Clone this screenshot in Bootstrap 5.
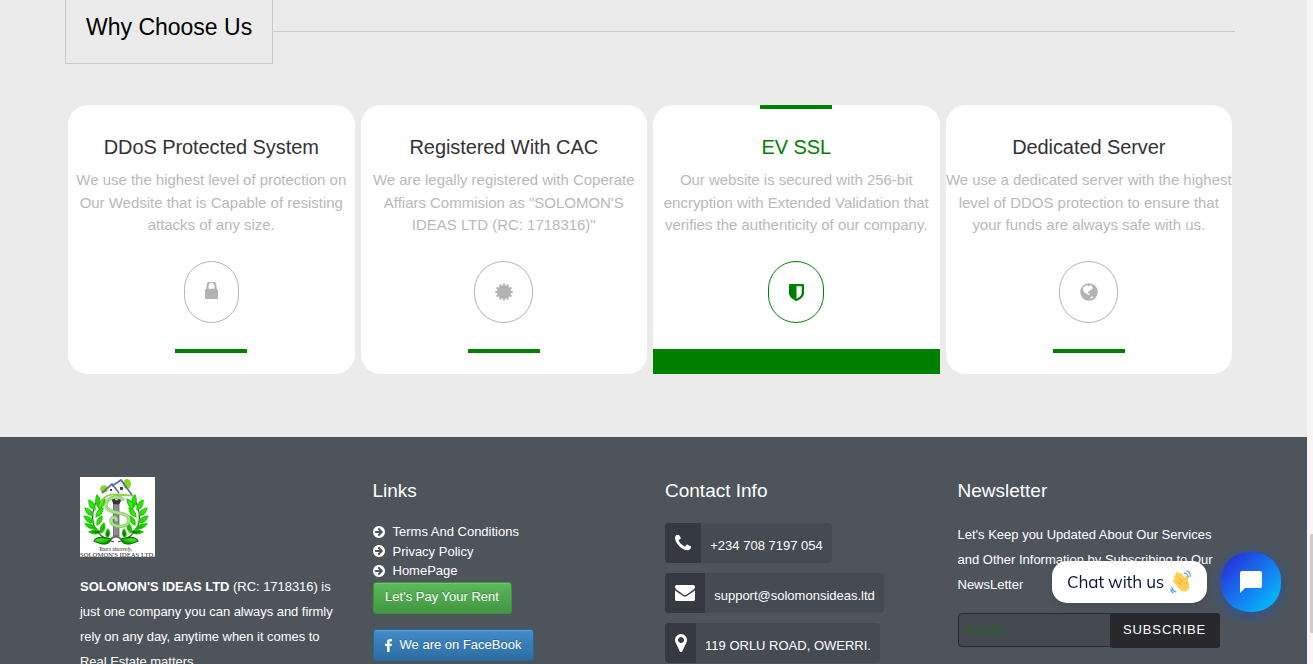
<!DOCTYPE html>
<html lang="en">
<head>
<meta charset="utf-8">
<meta name="viewport" content="width=device-width, initial-scale=1">
<title>Solomon's Ideas LTD</title>
<link href="https://cdn.jsdelivr.net/npm/bootstrap@5.3.0/dist/css/bootstrap.min.css" rel="stylesheet">
<style>
html,body{height:664px;overflow:hidden}
body{font-family:"Liberation Sans",Arial,sans-serif;background:#ebebeb;font-size:13px;line-height:20px;color:#fff}
.page{width:1307px;height:664px;overflow:hidden}
.track{width:6px;height:664px;background:#f6f6f6;padding-top:534px}
.thumb{width:3px;height:99px;margin-left:3px;background:#cbcbcb;border-radius:2px 0 0 2px}
.wrap{width:1170px;margin-left:65px}
.heading{height:105px}
.heading h2{width:208px;height:64px;border:1px solid #c9c9c9;border-top:0;font-size:23px;line-height:28px;padding:13px 0 0 20px;margin:0;color:#000;white-space:nowrap}
.rule{height:1px;background:#c9c9c9;margin-top:31px}
.slot{padding:0 3px}
.feature{height:269px;background:#fff;border-radius:20px;color:#b9b9b9;font-size:15px;line-height:22.5px;padding-top:31px;text-align:center;white-space:nowrap;letter-spacing:-.02px}
.feature h3{font-size:20px;line-height:22px;color:#333;margin:0 0 11px;letter-spacing:-.08px}
.feature p{margin:0 -10px;height:67.5px}
.ring{height:62px;border:1px solid #b3b3b3;border-radius:30px;margin:24.5px auto 0;color:#b3b3b3}
.bar{width:72px;height:4px;background:green;margin:26px auto 0}
.feature.active{border-radius:20px 20px 0 0}
.active h3{color:green}
.active .ring{border-color:green;color:green}
.topbar{width:72px;height:4px;background:green;left:107px;top:0}
.active .bar{width:100%;height:25px}
.foot{margin-top:63px;background:#4d555b;height:227px;padding-top:40px}
.fcol{padding-left:15px}
.foot h4{font-size:19px;line-height:20px;margin:4px 0 -1px;font-weight:400}
.about{line-height:25px;margin-top:17px;white-space:nowrap;letter-spacing:-.04px}
.links{margin-top:22px;line-height:19.5px}
.links svg{width:12px;height:12px;margin-right:8px}
.btn-pay,.btn-fb{height:32px;padding:0 0 2px;border-radius:3px;color:#fff;font-size:13px;line-height:28px;text-shadow:0 -1px 0 rgba(0,0,0,.2);box-shadow:inset 0 1px 0 rgba(255,255,255,.15)}
.btn-pay{width:139px;margin-top:1px;background:linear-gradient(#5cb85c,#419641);border:1px solid #3e8f3e}
.btn-fb{width:161px;padding:1px 0 0;background:linear-gradient(#428bca,#2d6ca2);border:1px solid #2b669a}
.dotgap{height:15px;line-height:15px;font-size:10px;color:#30373c}
.infos{padding-top:23px}
.info{height:40px;background:#444b51;border-radius:4px;margin-bottom:10px;white-space:nowrap;overflow:hidden}
.info span{background:#343a40;height:40px}
.info b{font-weight:400;padding-top:5px}
.news{margin:22px -10px 16px 0;line-height:25px;white-space:nowrap}
.mail{width:153px;height:34px;background:#444b50;border:1px solid #27292c;border-radius:4px 0 0 4px;color:#1f6326;padding:5px 8px;font-size:13px}
.subscribe{width:110px;height:35px;background:#27292d;color:#fff;border-radius:3px;border:0;font-size:13px;letter-spacing:.9px;margin-left:-1px;padding:0 0 2px}
.bubble{left:1052px;top:561px;width:155px;height:42px;border-radius:15px;background:#fff;color:#081638;font:17px/42px Mulish,Lato,sans-serif;letter-spacing:-.22px;padding-left:15px;box-shadow:0 2px 8px rgba(0,0,0,.12);white-space:nowrap}
.chat{left:1221px;top:552px;width:60px;height:60px;border-radius:28px;background:linear-gradient(135deg,#2a27da 5%,#00c4ff 95%);box-shadow:0 3px 14px rgba(0,77,255,.45)}
</style>
</head>
<body class="d-flex">
<svg class="d-none">
<symbol id="go" viewBox="128 128 1536 1536"><path fill="currentColor" d="M1413 896q0-27-18-45l-91-91-362-362q-18-18-45-18t-45 18l-91 91q-18 18-18 45t18 45l189 189h-502q-26 0-45 19t-19 45v128q0 26 19 45t45 19h502l-189 189q-19 19-19 45t19 45l91 91q18 18 45 18t45-18l362-362 91-91q18-18 18-45zm251 0q0 209-103 385.500t-279.500 279.500-385.500 103-385.500-103-279.500-279.500-103-385.500 103-385.500 279.500-279.500 385.500-103 385.500 103 279.500 279.500 103 385.500z"/></symbol>
</svg>
<div class="page">
<section class="wrap">
<div class="heading d-flex"><h2 class="fw-normal">Why Choose Us</h2><div class="rule flex-grow-1"></div></div>
<div class="row g-0">
<div class="col-3 slot"><div class="feature"><h3 class="fw-normal">DDoS Protected System</h3><p>We use the highest level of protection on<br>Our Wedsite that is Capable of resisting<br>attacks of any size.</p>
<div class="ring d-flex align-items-center justify-content-center" style="width:55px"><svg class="mb-1" width="13" height="17" viewBox="0 256 1152 1280" preserveAspectRatio="none"><path fill="currentColor" d="M320 768h512v-192q0-106-75-181t-181-75-181 75-75 181v192zm832 96v576q0 40-28 68t-68 28h-960q-40 0-68-28t-28-68v-576q0-40 28-68t68-28h32v-192q0-184 132-316t316-132 316 132 132 316v192h32q40 0 68 28t28 68z"/></svg></div><div class="bar"></div></div></div>
<div class="col-3 slot"><div class="feature"><h3 class="fw-normal">Registered With CAC</h3><p>We are legally registered with Coperate<br>Affiars Commision as "SOLOMON'S<br>IDEAS LTD (RC: 1718316)"</p>
<div class="ring d-flex align-items-center justify-content-center" style="width:59px"><svg width="18" height="18" viewBox="-9 -9 18 18" fill="currentColor"><circle r="7"/><g stroke="currentColor" stroke-width="2"><path id="spoke" d="M0-8.700V8.700"/><use href="#spoke" transform="rotate(30)"/><use href="#spoke" transform="rotate(60)"/><use href="#spoke" transform="rotate(90)"/><use href="#spoke" transform="rotate(120)"/><use href="#spoke" transform="rotate(150)"/></g></svg></div><div class="bar"></div></div></div>
<div class="col-3 slot"><div class="feature active position-relative"><div class="topbar position-absolute"></div><h3 class="fw-normal">EV SSL</h3><p>Our website is secured with 256-bit<br>encryption with Extended Validation that<br>verifies the authenticity of our company.</p>
<div class="ring d-flex align-items-center justify-content-center" style="width:56px"><svg width="15" height="17" viewBox="256 128 1280 1536" preserveAspectRatio="none"><path fill="currentColor" d="M1344 960v-640h-448v1137q119-63 213-137 235-184 235-360zm192-768v768q0 86-33.500 170.500t-83 150-118 127.500-126.500 103-121 77.500-89.500 49.500-42.500 20q-12 6-26 6t-26-6q-16-7-42.500-20t-89.500-49.500-121-77.500-126.500-103-118-127.500-83-150-33.500-170.500v-768q0-26 19-45t45-19h1152q26 0 45 19t19 45z"/></svg></div><div class="bar"></div></div></div>
<div class="col-3 slot"><div class="feature"><h3 class="fw-normal">Dedicated Server</h3><p>We use a dedicated server with the highest<br>level of DDOS protection to ensure that<br>your funds are always safe with us.</p>
<div class="ring d-flex align-items-center justify-content-center" style="width:59px"><svg width="18" height="18" viewBox="0 0 18 18"><circle cx="9" cy="9" r="8.800" fill="currentColor"/><path fill="#fff" d="M3.300 4.500 5.500 2.800 8 2.300 8.800 3.400 10.500 2.200 12.600 3 11.500 3.900 13.400 4.800 12 6.200 10.200 7 9.300 8.600 7.800 8.800 8 10 9.500 10.600 10 11.500 9.500 12 8 11.500 6.300 10.800 4.200 9.200 3.200 7Z M11 13.800 13 13.200 12.500 15 9.800 15.800Z"/></svg></div><div class="bar"></div></div></div>
</div>
</section>
<footer class="foot"><div class="wrap row g-0">
<div class="col-3 fcol">
<svg class="d-block" width="75" height="80" viewBox="0 0 75 80"><defs><linearGradient id="lf" x2="1" y2="1"><stop stop-color="#4dff16"/><stop offset=".5" stop-color="#23d800"/><stop offset="1" stop-color="#075a00"/></linearGradient>
<g id="wreath"><path d="M34 65C13 59 7 42 18 21" fill="none" stroke="#414b36" stroke-width="1.200"/><g fill="url(#lf)" stroke="#22c808" stroke-width="1.100"><path d="M17 18q-3 6 1 12 5-6-1-12ZM9 23q-1 7 6 10 1-7-6-10ZM5 31q1 7 8 8-1-7-8-8ZM4 39q2 7 10 7-3-7-10-7ZM5 47q4 6 12 5-5-6-12-5ZM9 55q6 4 13 0-7-4-13 0Z"/><path d="M14 64q3-6 17-2-3 9-17 2Z" stroke="#0b6505"/><path d="M25 22q-7 3-6 10 6-3 6-10ZM23 31q-7 2-7 9 7-2 7-9ZM22 39q-6 3-5 9 6-3 5-9ZM24 46q-5 4-3 10 6-4 3-10ZM28 52q-4 4-1 9 5-4 1-9Z"/></g></g></defs>
<rect width="75" height="80" fill="#fff"/><circle cx="24" cy="12" r="3.800" fill="#8bd817"/><ellipse cx="47" cy="7" rx="4" ry="5" fill="#8bd817"/>
<use href="#wreath"/><use href="#wreath" transform="translate(72 0) scale(-1 1)"/>
<path d="M33.500 24h5.500v35h-5.500z" fill="#8c8c8c" stroke="#555" stroke-width=".7"/><path d="M31 62q5-5 10 0" fill="none" stroke="#666" stroke-width="2"/><circle cx="36.500" cy="23" r="4.500" fill="#333"/><circle cx="36.500" cy="22" r="1.500" fill="#ccc"/>
<path d="M20 29C22 15 37 16 54 19 37 17 28 19 26 26" fill="none" stroke="#8bd045" stroke-width="1.600"/><path d="M44 23C35 16 22 24 27 31 32 38 49 34 49 43 49 52 30 51 31 43 32 39 38 40 36 44" fill="none" stroke="#78bd61" stroke-width="3.300"/><path d="M44 23C35 16 22 24 27 31 32 38 49 34 49 43 49 52 30 51 31 43 32 39 38 40 36 44" fill="none" stroke="#a8e38a" stroke-width="2.200"/>
<path d="m22 16 10-9 7 9m-7-7 9-6 11 15" fill="none" stroke="#6068b3" stroke-width="1.700"/><path d="M30 12h2v2h-2zM40 10h3v3h-3z" fill="#374168"/>
<text x="19" y="73.500" font-family="Liberation Serif,serif" font-size="5.500" font-style="italic" textLength="33" fill="#222">Yours sincerely,</text><text x="0" y="79.500" font-family="Liberation Serif,serif" font-size="6" textLength="75" lengthAdjust="spacingAndGlyphs" fill="#222">SOLOMON'S IDEAS LTD.</text></svg>
<p class="about"><strong>SOLOMON'S IDEAS LTD</strong> (RC: 1718316) is<br>just one company you can always and firmly<br>rely on any day, anytime when it comes to<br>Real Estate matters.</p></div>
<div class="col-3 fcol"><h4>Links</h4><div class="links"><div class="d-flex align-items-center"><svg><use href="#go"/></svg>Terms And Conditions</div><div class="d-flex align-items-center"><svg><use href="#go"/></svg>Privacy Policy</div><div class="d-flex align-items-center"><svg><use href="#go"/></svg>HomePage</div></div>
<button class="btn btn-pay d-block">Let's Pay Your Rent</button><div class="dotgap">.</div><button class="btn btn-fb d-flex justify-content-center"><svg class="mt-2 me-2" width="7" height="13" viewBox="479 0 864 1664" preserveAspectRatio="none"><path fill="#fff" d="M1343 12v264h-157q-86 0-116 36t-30 108v189h293l-39 296h-254v759h-306v-759h-255v-296h255v-218q0-186 104-288.500t277-102.500q147 0 228 12z"/></svg>We are on FaceBook</button></div>
<div class="col-3 fcol"><h4>Contact Info</h4><div class="infos">
<div class="info d-flex" style="width:167px"><span class="d-flex align-items-center justify-content-center" style="width:36px"><svg width="16" height="16" viewBox="0 192 1408 1408"><path fill="#fff" d="M1408 1240q0 27-10 70.500t-21 68.500q-21 50-122 106-94 51-186 51-27 0-53-3.500t-57.500-12.500-47-14.500-55.500-20.500-49-18q-98-35-175-83-127-79-264-216t-216-264q-48-77-83-175-3-9-18-49t-20.500-55.500-14.500-47-12.500-57.500-3.500-53q0-92 51-186 56-101 106-122 25-11 68.500-21t70.500-10q14 0 21 3 18 6 53 76 11 19 30 54t35 63.500 31 53.500q3 4 17.500 25t21.500 35.500 7 28.500q0 20-28.500 50t-62 55-62 53-28.500 46q0 9 5 22.500t8.500 20.500 14 24 11.500 19q76 137 174 235t235 174q2 1 19 11.500t24 14 20.500 8.500 22.500 5q18 0 46-28.500t53-62 55-62 50-28.500q14 0 28.500 7t35.500 21.500 25 17.500q25 15 53.500 31t63.500 35 54 30q70 35 76 53 3 7 3 21z"/></svg></span><b class="flex-grow-1 d-flex align-items-center justify-content-center pe-1 ps-1 ms-n1">+234 708 7197 054</b></div>
<div class="info d-flex" style="width:219px"><span class="d-flex align-items-center justify-content-center" style="width:40px"><svg width="20" height="16" viewBox="0 256 1792 1408" preserveAspectRatio="none"><path fill="#fff" d="M1792 710v794q0 66-47 113t-113 47h-1472q-66 0-113-47t-47-113v-794q44 49 101 87 362 246 497 345 57 42 92.500 65.500t94.500 48 110 24.500h2q51 0 110-24.500t94.500-48 92.500-65.500q170-123 498-345 57-39 100-87zm0-294q0 79-49 151t-122 123q-376 261-468 325-10 7-42.500 31t-54 38.800-52 32.500-57.500 27-50 9h-2q-23 0-50-9t-57.500-27-52-32.500-54-38.800-42.500-31q-91-64-262-182.500t-205-142.500q-62-42-117-115.500t-55-136.500q0-78 41.500-130t118.500-52h1472q65 0 112.500 47t47.500 113z"/></svg></span><b class="flex-grow-1 d-flex align-items-center justify-content-center">support@solomonsideas.ltd</b></div>
<div class="info d-flex" style="width:215px"><span class="d-flex align-items-center justify-content-center" style="width:31px"><svg width="12" height="18" viewBox="384 128 1024 1536"><path fill="#fff" d="M1152 640q0-106-75-181t-181-75-181 75-75 181 75 181 181 75 181-75 75-181zm256 0q0 109-33 179l-364 774q-16 33-47.500 52t-67.500 19-67.500-19-46.500-52l-365-774q-33-70-33-179 0-212 150-362t362-150 362 150 150 362z"/></svg></span><b class="flex-grow-1 d-flex align-items-center justify-content-center">119 ORLU ROAD, OWERRI.</b></div></div></div>
<div class="col-3 fcol"><h4>Newsletter</h4><p class="news">Let's Keep you Updated About Our Services<br>and Other Information by Subscribing to Our<br>NewsLetter</p><div class="d-flex"><div class="mail">e-mail</div><button class="subscribe">SUBSCRIBE</button></div></div>
</div></footer>
</div>
<div class="track"><div class="thumb"></div></div>
<div class="bubble position-fixed d-flex align-items-center">Chat with us<svg style="margin-left:6px" width="22" height="24" viewBox="0 0 24 24" preserveAspectRatio="none"><g fill="none" stroke="#ffcf52" stroke-width="3.600" stroke-linecap="round"><path d="m12 14-6-7M14 12 8 4M16 12l-4-7M18 14V7M12 18l-7-7"/></g><path d="M8 13 15 7l5 5q3 7-2 9-5 2-10-4Z" fill="#ffcf52"/><path d="m9 12 3 3M11 9l3 3M17 14l1-2" stroke="#eb9f2e" fill="none"/><path d="M15 3q5 0 5 5M18 1q5 1 4 6M2 17q0 4 5 5M1 19q0 3 3 4" fill="none" stroke="#4d9edb" stroke-width="1.200"/></svg></div>
<div class="chat position-fixed d-flex align-items-center justify-content-center"><svg width="22" height="22" viewBox="0 0 22 22"><path fill="#fff" d="M2 0h18q2 0 2 2v13q0 2-2 2H5l-5 5V2q0-2 2-2Z"/></svg></div>
</body>
</html>
